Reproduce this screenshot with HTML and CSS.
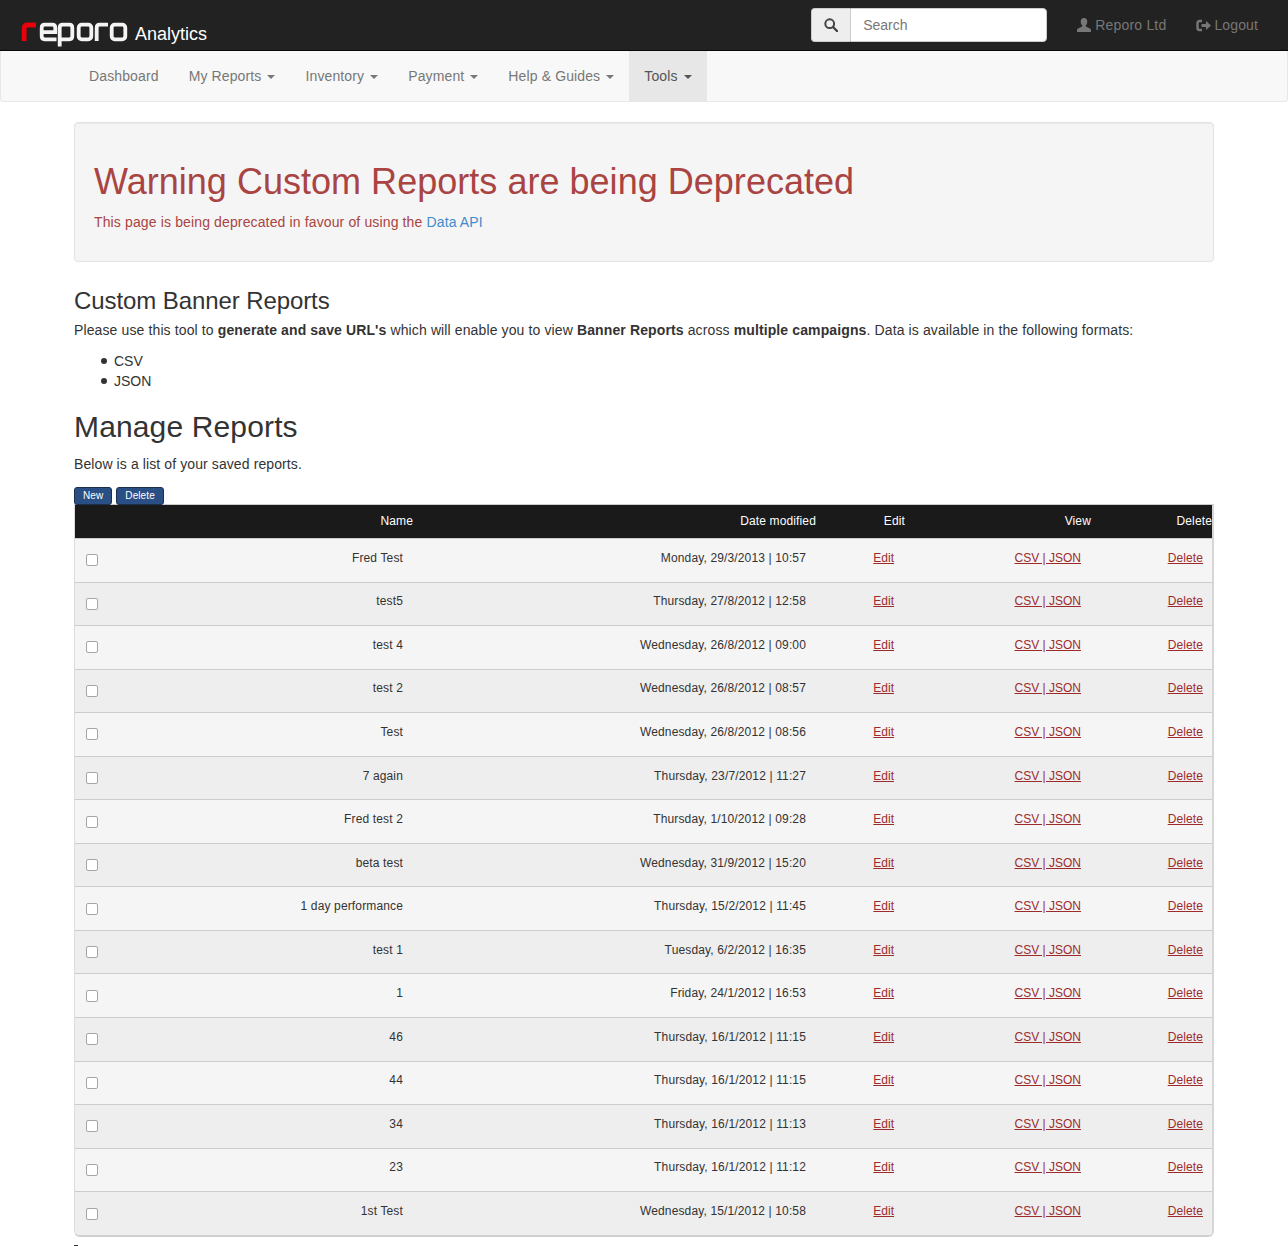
FILE: index.html
```html
<!DOCTYPE html>
<html lang="en">
<head>
<meta charset="utf-8">
<title>Reporo Analytics</title>
<link rel="stylesheet" href="styles.css">
</head>
<body>
<header class="topbar">
  <a class="brand" href="#">
    <svg class="logo" width="108" height="27" viewBox="0 0 108 27" fill="none" stroke-width="3.800">
      <path d="M3.200 21V7.700Q3.200 5 6 5H15" stroke="#e8000b" stroke-width="4.800"/>
      <path d="M20.700 12.200H34.300V7.700Q34.300 4.700 31.300 4.700H23.700Q20.700 4.700 20.700 7.700V16.300Q20.700 19.300 23.700 19.300H35.500" stroke="#f4f4f4"/>
      <path d="M38.700 26.500V7.700Q38.700 4.700 41.700 4.700H48.300Q51.300 4.700 51.300 7.700V16.300Q51.300 19.300 48.300 19.300H38.700" stroke="#f4f4f4"/>
      <rect x="57.700" y="4.700" width="12.600" height="14.600" rx="3" stroke="#f4f4f4"/>
      <path d="M75.700 21V7.700Q75.700 4.700 78.700 4.700H87" stroke="#f4f4f4"/>
      <rect x="90.700" y="4.700" width="13.600" height="14.600" rx="3" stroke="#f4f4f4"/>
    </svg>
    <span class="brand-name">Analytics</span>
  </a>
  <form class="search">
    <span class="search-addon">
      <svg width="14" height="14" viewBox="0 0 14 14" fill="none" stroke="#444" stroke-width="2"><circle cx="5.700" cy="5.700" r="4.400"/><path d="M9 9l4 4" stroke-width="2.400" stroke-linecap="round"/></svg>
    </span>
    <input class="search-input" type="text" placeholder="Search">
  </form>
  <a class="top-link link-user" href="#">
    <svg width="14" height="14" viewBox="0 0 14 14" fill="#777"><path d="M7 0C4.800 0 3.700 1.700 3.700 3.800c0 1.500.6 2.900 1.500 3.700v1.100L1 10.400C.3 10.800 0 11.400 0 12v2h14v-2c0-.6-.3-1.200-1-1.600L8.800 8.600V7.500c.9-.8 1.500-2.200 1.500-3.700C10.300 1.700 9.200 0 7 0z"/></svg>
    Reporo Ltd
  </a>
  <a class="top-link link-logout" href="#">
    <svg width="15" height="13" viewBox="0 0 15 13" fill="none"><path d="M6 2H3.500Q1.500 2 1.500 4V9Q1.500 11 3.500 11H6" stroke="#777" stroke-width="2.400"/><path d="M5.500 5H10V2L15 6.500 10 11V8H5.500Z" fill="#777"/></svg>
    Logout
  </a>
</header>

<nav class="navbar">
  <ul class="nav-list">
    <li><a href="#">Dashboard</a></li>
    <li><a href="#">My Reports <i class="caret"></i></a></li>
    <li><a href="#">Inventory <i class="caret"></i></a></li>
    <li><a href="#">Payment <i class="caret"></i></a></li>
    <li><a href="#">Help &amp; Guides <i class="caret"></i></a></li>
    <li class="active"><a href="#">Tools <i class="caret"></i></a></li>
  </ul>
</nav>

<main class="container">
  <section class="well">
    <h1 class="well-title">Warning Custom Reports are being Deprecated</h1>
    <p class="well-text">This page is being deprecated in favour of using the <a href="#">Data API</a></p>
  </section>

  <h3 class="sub-title">Custom Banner Reports</h3>
  <p class="intro">Please use this tool to <b>generate and save URL's</b> which will enable you to view <b>Banner Reports</b> across <b>multiple campaigns</b>. Data is available in the following formats:</p>
  <ul class="formats">
    <li>CSV</li>
    <li>JSON</li>
  </ul>

  <h2 class="manage-title">Manage Reports</h2>
  <p class="manage-text">Below is a list of your saved reports.</p>

  <div class="actions">
    <button class="btn" type="button">New</button>
    <button class="btn" type="button">Delete</button>
  </div>

  <div class="table-wrap">
    <table class="reports">
      <colgroup>
        <col class="c-check"><col class="c-name"><col class="c-date"><col class="c-edit"><col class="c-view"><col class="c-del">
      </colgroup>
      <thead>
        <tr><th></th><th class="name">Name</th><th class="date">Date modified</th><th class="edit">Edit</th><th class="view">View</th><th class="del">Delete</th></tr>
      </thead>
      <tbody>
        <tr><td class="check"><input type="checkbox"></td><td class="name">Fred Test</td><td class="date">Monday, 29/3/2013 | 10:57</td><td class="edit"><a href="#">Edit</a></td><td class="view"><a href="#">CSV | JSON</a></td><td class="del"><a href="#">Delete</a></td></tr>
        <tr><td class="check"><input type="checkbox"></td><td class="name">test5</td><td class="date">Thursday, 27/8/2012 | 12:58</td><td class="edit"><a href="#">Edit</a></td><td class="view"><a href="#">CSV | JSON</a></td><td class="del"><a href="#">Delete</a></td></tr>
        <tr><td class="check"><input type="checkbox"></td><td class="name">test 4</td><td class="date">Wednesday, 26/8/2012 | 09:00</td><td class="edit"><a href="#">Edit</a></td><td class="view"><a href="#">CSV | JSON</a></td><td class="del"><a href="#">Delete</a></td></tr>
        <tr><td class="check"><input type="checkbox"></td><td class="name">test 2</td><td class="date">Wednesday, 26/8/2012 | 08:57</td><td class="edit"><a href="#">Edit</a></td><td class="view"><a href="#">CSV | JSON</a></td><td class="del"><a href="#">Delete</a></td></tr>
        <tr><td class="check"><input type="checkbox"></td><td class="name">Test</td><td class="date">Wednesday, 26/8/2012 | 08:56</td><td class="edit"><a href="#">Edit</a></td><td class="view"><a href="#">CSV | JSON</a></td><td class="del"><a href="#">Delete</a></td></tr>
        <tr><td class="check"><input type="checkbox"></td><td class="name">7 again</td><td class="date">Thursday, 23/7/2012 | 11:27</td><td class="edit"><a href="#">Edit</a></td><td class="view"><a href="#">CSV | JSON</a></td><td class="del"><a href="#">Delete</a></td></tr>
        <tr><td class="check"><input type="checkbox"></td><td class="name">Fred test 2</td><td class="date">Thursday, 1/10/2012 | 09:28</td><td class="edit"><a href="#">Edit</a></td><td class="view"><a href="#">CSV | JSON</a></td><td class="del"><a href="#">Delete</a></td></tr>
        <tr><td class="check"><input type="checkbox"></td><td class="name">beta test</td><td class="date">Wednesday, 31/9/2012 | 15:20</td><td class="edit"><a href="#">Edit</a></td><td class="view"><a href="#">CSV | JSON</a></td><td class="del"><a href="#">Delete</a></td></tr>
        <tr><td class="check"><input type="checkbox"></td><td class="name">1 day performance</td><td class="date">Thursday, 15/2/2012 | 11:45</td><td class="edit"><a href="#">Edit</a></td><td class="view"><a href="#">CSV | JSON</a></td><td class="del"><a href="#">Delete</a></td></tr>
        <tr><td class="check"><input type="checkbox"></td><td class="name">test 1</td><td class="date">Tuesday, 6/2/2012 | 16:35</td><td class="edit"><a href="#">Edit</a></td><td class="view"><a href="#">CSV | JSON</a></td><td class="del"><a href="#">Delete</a></td></tr>
        <tr><td class="check"><input type="checkbox"></td><td class="name">1</td><td class="date">Friday, 24/1/2012 | 16:53</td><td class="edit"><a href="#">Edit</a></td><td class="view"><a href="#">CSV | JSON</a></td><td class="del"><a href="#">Delete</a></td></tr>
        <tr><td class="check"><input type="checkbox"></td><td class="name">46</td><td class="date">Thursday, 16/1/2012 | 11:15</td><td class="edit"><a href="#">Edit</a></td><td class="view"><a href="#">CSV | JSON</a></td><td class="del"><a href="#">Delete</a></td></tr>
        <tr><td class="check"><input type="checkbox"></td><td class="name">44</td><td class="date">Thursday, 16/1/2012 | 11:15</td><td class="edit"><a href="#">Edit</a></td><td class="view"><a href="#">CSV | JSON</a></td><td class="del"><a href="#">Delete</a></td></tr>
        <tr><td class="check"><input type="checkbox"></td><td class="name">34</td><td class="date">Thursday, 16/1/2012 | 11:13</td><td class="edit"><a href="#">Edit</a></td><td class="view"><a href="#">CSV | JSON</a></td><td class="del"><a href="#">Delete</a></td></tr>
        <tr><td class="check"><input type="checkbox"></td><td class="name">23</td><td class="date">Thursday, 16/1/2012 | 11:12</td><td class="edit"><a href="#">Edit</a></td><td class="view"><a href="#">CSV | JSON</a></td><td class="del"><a href="#">Delete</a></td></tr>
        <tr><td class="check"><input type="checkbox"></td><td class="name">1st Test</td><td class="date">Wednesday, 15/1/2012 | 10:58</td><td class="edit"><a href="#">Edit</a></td><td class="view"><a href="#">CSV | JSON</a></td><td class="del"><a href="#">Delete</a></td></tr>
      </tbody>
    </table>
  </div>
  <div class="tail"></div>
</main>
</body>
</html>
```
FILE: styles.css
```css
* { box-sizing: border-box; }
html, body { margin: 0; padding: 0; }
body {
  font-family: "Liberation Sans", Arial, sans-serif;
  font-size: 14px;
  line-height: 20px;
  letter-spacing: .135px;
  color: #333;
  background: #fff;
}
a { text-decoration: none; }

.topbar {
  height: 51px;
  background: #222;
  border-bottom: 1px solid #080808;
  display: flex;
  align-items: flex-start;
}
.brand {
  display: flex;
  align-items: flex-start;
  margin-left: 21px;
  padding-top: 20px;
  color: #fff;
}
.logo { display: block; }
.brand-name {
  margin-left: 6px;
  margin-top: 2px;
  font-size: 18px;
  line-height: 24px;
  letter-spacing: 0;
}
.search {
  display: flex;
  width: 236px;
  height: 34px;
  margin: 8px 0 0 auto;
}
.search-addon {
  width: 39px;
  background: #eee;
  border: 1px solid #ccc;
  border-right: 0;
  border-radius: 4px 0 0 4px;
  display: flex;
  align-items: center;
  justify-content: center;
}
.search-input {
  flex: 1;
  min-width: 0;
  height: 34px;
  padding: 6px 12px;
  border: 1px solid #ccc;
  border-radius: 0 4px 4px 0;
  font: 14px/20px "Liberation Sans", Arial, sans-serif;
  color: #555;
  background: #fff;
}
.search-input::placeholder { color: #777; opacity: 1; }
.top-link {
  display: flex;
  align-items: center;
  gap: 4px;
  height: 50px;
  color: #777;
  white-space: nowrap;
  letter-spacing: .2px;
}
.link-user { margin-left: 30px; }
.link-logout { margin-left: 30px; margin-right: 30px; gap: 3px; letter-spacing: .12px; }

.navbar {
  height: 51px;
  background: #f8f8f8;
  border: 1px solid #e7e7e7;
  border-top: 0;
  border-radius: 0 0 4px 4px;
  padding-left: 73px;
}
.nav-list {
  display: flex;
  list-style: none;
  margin: 0;
  padding: 0;
  letter-spacing: .125px;
}
.nav-list a {
  display: block;
  padding: 15px;
  height: 50px;
  color: #777;
}
.nav-list .active a { background: #e7e7e7; color: #555; padding-right: 15.5px; }
.caret {
  display: inline-block;
  width: 0;
  height: 0;
  margin-left: 2px;
  vertical-align: middle;
  border-top: 4px solid;
  border-left: 4px solid transparent;
  border-right: 4px solid transparent;
}

.container {
  width: 1140px;
  margin: 20px 0 0 74px;
}
.well {
  height: 140px;
  padding: 19px;
  background: #f5f5f5;
  border: 1px solid #e3e3e3;
  border-radius: 4px;
  box-shadow: inset 0 1px 1px rgba(0,0,0,.05);
  color: #a94442;
}
.well-title {
  margin: 20px 0 10px;
  font-size: 36px;
  line-height: 40px;
  font-weight: 500;
  letter-spacing: .025px;
}
.well-text { margin: 0; }
.well-text a { color: #428bca; }

.sub-title {
  margin: 25px 0 0;
  font-size: 24px;
  line-height: 28px;
  font-weight: 500;
  letter-spacing: -.09px;
  color: #333;
}
.intro { margin: 5px 0 11px; letter-spacing: .12px; }
.formats { margin: 0 0 10px; padding: 0 0 0 40px; list-style: none; letter-spacing: 0; }
.formats li { display: flex; align-items: center; }
.formats li::before {
  content: "";
  width: 6px;
  height: 6px;
  margin: 0 7px 0 -13px;
  border-radius: 50%;
  background: #333;
}

.manage-title {
  margin: 19px 0 11px;
  font-size: 30px;
  line-height: 33px;
  font-weight: 500;
  letter-spacing: .14px;
}
.manage-text { margin: 0 0 13px; letter-spacing: .1px; }

.actions { display: flex; gap: 4px; height: 17px; }
.btn {
  height: 18px;
  padding: 0 8px;
  font: 10px/16px "Liberation Sans", Arial, sans-serif;
  letter-spacing: .1px;
  color: #fff;
  background: #2a4f85;
  border: 1px solid #1b2f4d;
  border-radius: 3px;
  position: relative;
  z-index: 1;
}

.table-wrap {
  border: 1px solid #ccc;
  border-right: 2px solid #d6d6d6;
  border-bottom: 2px solid #d0d0d0;
  border-left-color: #ddd;
  border-radius: 0 0 6px 6px;
  overflow: hidden;
}
.reports {
  width: 100%;
  border-collapse: collapse;
  table-layout: fixed;
  font-size: 12px;
  line-height: 16px;
  letter-spacing: .14px;
}
.c-check { width: 40px; }
.c-name { width: 298px; }
.c-date { width: 403px; }
.c-edit { width: 89px; }
.c-view { width: 186px; }
.c-del { width: 121px; }
.reports th {
  height: 33.5px;
  background: #1a1a1a;
  color: #fff;
  font-weight: 400;
  padding: 0 0 2px;
  text-align: right;
}
.reports td {
  height: 43.56px;
  padding: 0 0 5px;
  border-top: 1px solid #ccc;
  text-align: right;
  color: #333;
}
.reports tbody tr:nth-child(odd) td { background: #f5f5f5; }
.reports tbody tr:nth-child(even) td { background: #eee; }
.reports td.check { text-align: left; padding: 0 0 0 11px; }
.reports td.check input {
  appearance: none;
  display: block;
  margin: 0;
  width: 12px;
  height: 12px;
  background: #fff;
  border: 1px solid #a6a6a6;
  border-radius: 2px;
}
.reports a { color: #9c2c2c; text-decoration: underline; letter-spacing: 0; }
.reports td.name { padding-right: 10px; }
.reports td.date { padding-right: 10px; }
.reports td.edit { padding-right: 11px; }
.reports td.view { padding-right: 10px; }
.reports td.del { padding-right: 9px; }
.reports td.del a { letter-spacing: .1px; }
.tail {
  width: 4px;
  height: 1px;
  margin-top: 8px;
  background: #333;
}
```
